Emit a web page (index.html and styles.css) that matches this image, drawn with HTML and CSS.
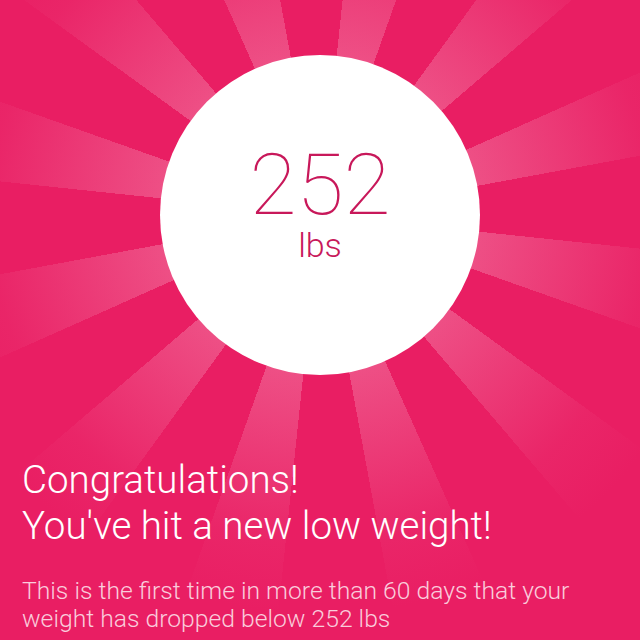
FILE: index.html
```html
<!DOCTYPE html>
<html lang="en">
<head>
    <meta charset="UTF-8">
    <meta name="viewport" content="width=device-width, initial-scale=1.0">
    <title>New Low Weight</title>
    <link rel="stylesheet" href="styles.css">
</head>
<body>
    <main class="screen">
        <!-- Weight badge -->
        <section class="badge">
            <div class="circle">
                <span class="value">252</span>
                <span class="unit">lbs</span>
            </div>
        </section>

        <!-- Message -->
        <section class="message">
            <h1>Congratulations!<br>You've hit a new low weight!</h1>
            <p>This is the first time in more than 60 days that your weight has dropped below 252 lbs</p>
        </section>
    </main>
</body>
</html>
```

FILE: styles.css
```css
body {
    --pink: #e91e63;
    margin: 0;
    font-family: Roboto, "Noto Sans", sans-serif;
    background-color: var(--pink);
}
.screen {
    width: 640px;
    height: 640px;
    overflow: hidden;
    background:
        radial-gradient(circle at 320px 215px, rgba(233, 30, 99, 0) 160px, rgba(233, 30, 99, 0.45) 250px, rgba(233, 30, 99, 0.85) 330px, var(--pink) 400px),
        repeating-conic-gradient(from 6deg at 320px 215px, rgba(255, 255, 255, 0.22) 0deg 13.5deg, rgba(255, 255, 255, 0) 13.5deg 30deg),
        var(--pink);
}
.badge {
    display: flex;
    justify-content: center;
    padding-top: 55px;
}
.circle {
    width: 320px;
    height: 320px;
    border-radius: 50%;
    background-color: #fff;
    display: flex;
    flex-direction: column;
    align-items: center;
    padding-top: 87px;
    box-sizing: border-box;
    color: #c8185a;
}
.value {
    font-size: 86px;
    font-weight: 100;
    line-height: 1;
}
.unit {
    font-size: 34px;
    font-weight: 300;
    line-height: 1;
}
.message {
    padding: 82px 22px 0;
    color: #fff;
}
.message h1 {
    margin: 0;
    font-size: 38.5px;
    font-weight: 300;
    line-height: 46px;
}
.message p {
    margin: 28px 0 0;
    font-size: 24.7px;
    font-weight: 300;
    line-height: 28px;
    color: rgba(255, 255, 255, 0.78);
}
```
